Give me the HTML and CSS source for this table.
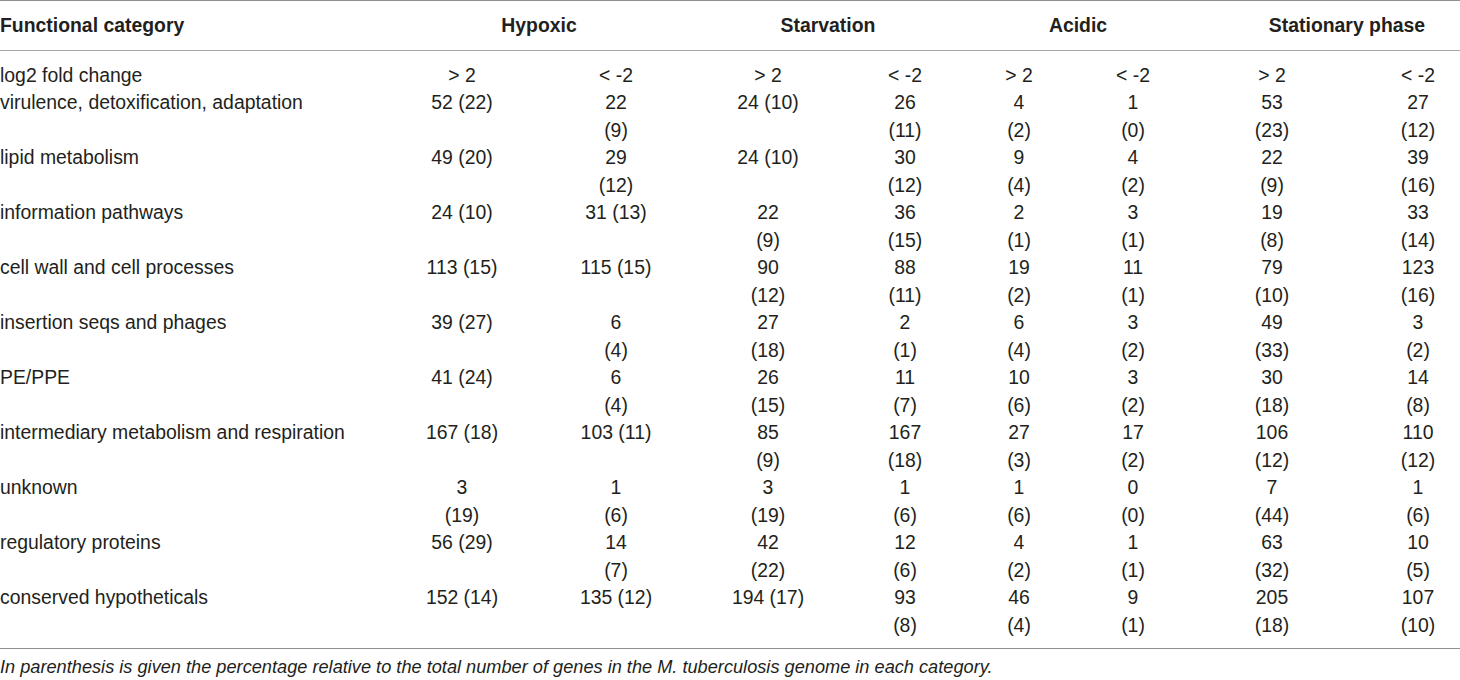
FILE: index.html
```html
<!DOCTYPE html>
<html lang="en">
<head>
<meta charset="utf-8">
<title>Functional categories</title>
<link rel="stylesheet" href="styles.css">
</head>
<body>
<div class="table">
  <div class="head">
    <div class="h-cat">Functional category</div>
    <div class="h-hyp">Hypoxic</div>
    <div class="h-sta">Starvation</div>
    <div class="h-aci">Acidic</div>
    <div class="h-stn">Stationary phase</div>
  </div>
  <div class="body">
    <div class="row"><span>log2 fold change</span><span>&gt; 2</span><span>&lt; -2</span><span>&gt; 2</span><span>&lt; -2</span><span>&gt; 2</span><span>&lt; -2</span><span>&gt; 2</span><span>&lt; -2</span></div>
    <div class="row"><span>virulence, detoxification, adaptation</span><span>52 (22)</span><span>22<br>(9)</span><span>24 (10)</span><span>26<br>(11)</span><span>4<br>(2)</span><span>1<br>(0)</span><span>53<br>(23)</span><span>27<br>(12)</span></div>
    <div class="row"><span>lipid metabolism</span><span>49 (20)</span><span>29<br>(12)</span><span>24 (10)</span><span>30<br>(12)</span><span>9<br>(4)</span><span>4<br>(2)</span><span>22<br>(9)</span><span>39<br>(16)</span></div>
    <div class="row"><span>information pathways</span><span>24 (10)</span><span>31 (13)</span><span>22<br>(9)</span><span>36<br>(15)</span><span>2<br>(1)</span><span>3<br>(1)</span><span>19<br>(8)</span><span>33<br>(14)</span></div>
    <div class="row"><span>cell wall and cell processes</span><span>113 (15)</span><span>115 (15)</span><span>90<br>(12)</span><span>88<br>(11)</span><span>19<br>(2)</span><span>11<br>(1)</span><span>79<br>(10)</span><span>123<br>(16)</span></div>
    <div class="row"><span>insertion seqs and phages</span><span>39 (27)</span><span>6<br>(4)</span><span>27<br>(18)</span><span>2<br>(1)</span><span>6<br>(4)</span><span>3<br>(2)</span><span>49<br>(33)</span><span>3<br>(2)</span></div>
    <div class="row"><span>PE/PPE</span><span>41 (24)</span><span>6<br>(4)</span><span>26<br>(15)</span><span>11<br>(7)</span><span>10<br>(6)</span><span>3<br>(2)</span><span>30<br>(18)</span><span>14<br>(8)</span></div>
    <div class="row"><span>intermediary metabolism and respiration</span><span>167 (18)</span><span>103 (11)</span><span>85<br>(9)</span><span>167<br>(18)</span><span>27<br>(3)</span><span>17<br>(2)</span><span>106<br>(12)</span><span>110<br>(12)</span></div>
    <div class="row"><span>unknown</span><span>3<br>(19)</span><span>1<br>(6)</span><span>3<br>(19)</span><span>1<br>(6)</span><span>1<br>(6)</span><span>0<br>(0)</span><span>7<br>(44)</span><span>1<br>(6)</span></div>
    <div class="row"><span>regulatory proteins</span><span>56 (29)</span><span>14<br>(7)</span><span>42<br>(22)</span><span>12<br>(6)</span><span>4<br>(2)</span><span>1<br>(1)</span><span>63<br>(32)</span><span>10<br>(5)</span></div>
    <div class="row"><span>conserved hypotheticals</span><span>152 (14)</span><span>135 (12)</span><span>194 (17)</span><span>93<br>(8)</span><span>46<br>(4)</span><span>9<br>(1)</span><span>205<br>(18)</span><span>107<br>(10)</span></div>
  </div>
</div>
<p class="note">In parenthesis is given the percentage relative to the total number of genes in the M. tuberculosis genome in each category.</p>
</body>
</html>
```
FILE: styles.css
```css
html, body {
  margin: 0;
  padding: 0;
  overflow: hidden;
  background: #ffffff;
}
body {
  font-family: "Liberation Sans", Arial, sans-serif;
  font-size: 19.4px;
  line-height: 27.5px;
  color: #231f20;
}
.table {
  border-top: 1px solid #8f8f8f;
  border-bottom: 1px solid #8f8f8f;
}
.head {
  display: grid;
  grid-template-columns: 480px 118px 171px 118px 132px 118px 123px 174px;
  padding: 11px 0 10px;
  border-bottom: 1px solid #a8a8a8;
  font-weight: bold;
  white-space: nowrap;
}
.h-cat { grid-column: 1; text-align: left; }
.h-hyp { grid-column: 2; text-align: center; }
.h-sta { grid-column: 4; text-align: center; }
.h-aci { grid-column: 6; text-align: center; }
.h-stn { grid-column: 8; text-align: center; }
.body {
  padding: 11px 0 9px;
}
.row {
  display: grid;
  grid-template-columns: 358px 208px 100px 204px 70px 158px 70px 208px 84px;
}
.row > span {
  text-align: center;
  white-space: nowrap;
}
.row > span:first-child {
  text-align: left;
}
.note {
  margin: 7px 0 0;
  font-size: 18.2px;
  line-height: 22px;
  font-style: italic;
  white-space: nowrap;
}
```
